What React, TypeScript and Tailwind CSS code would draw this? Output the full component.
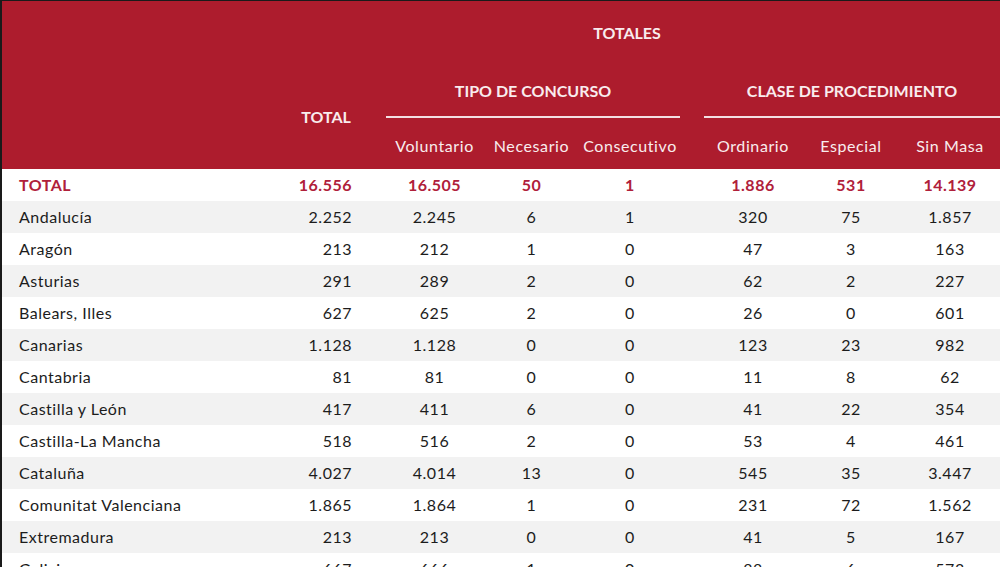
const rows: [string, string, string, string, string, string, string, string][] = [
  ['Andalucía', '2.252', '2.245', '6', '1', '320', '75', '1.857'],
  ['Aragón', '213', '212', '1', '0', '47', '3', '163'],
  ['Asturias', '291', '289', '2', '0', '62', '2', '227'],
  ['Balears, Illes', '627', '625', '2', '0', '26', '0', '601'],
  ['Canarias', '1.128', '1.128', '0', '0', '123', '23', '982'],
  ['Cantabria', '81', '81', '0', '0', '11', '8', '62'],
  ['Castilla y León', '417', '411', '6', '0', '41', '22', '354'],
  ['Castilla-La Mancha', '518', '516', '2', '0', '53', '4', '461'],
  ['Cataluña', '4.027', '4.014', '13', '0', '545', '35', '3.447'],
  ['Comunitat Valenciana', '1.865', '1.864', '1', '0', '231', '72', '1.562'],
  ['Extremadura', '213', '213', '0', '0', '41', '5', '167'],
  ['Galicia', '667', '666', '1', '0', '88', '6', '573'],
]

const cols = 'grid grid-cols-[288px_72px_24px_97px_97px_100px_24px_98px_98px_100px]'

function Row({ r, idx, total }: { r: string[]; idx: number; total?: boolean }) {
  const bg = idx % 2 === 1 ? 'bg-[#f2f2f2]' : 'bg-white'
  const txt = total ? 'font-bold text-[#b0203a]' : 'text-[#1c1c1c]'
  return (
    <div className={`${cols} ${bg} ${txt} h-8 items-center text-[16px] tracking-[0.5px]`}>
      <div className="pl-[17px]">{r[0]}</div>
      <div className="pr-[10px] text-right">{r[1]}</div>
      <div />
      <div className="text-center">{r[2]}</div>
      <div className="text-center">{r[3]}</div>
      <div className="text-center">{r[4]}</div>
      <div />
      <div className="text-center">{r[5]}</div>
      <div className="text-center">{r[6]}</div>
      <div className="text-center">{r[7]}</div>
    </div>
  )
}

export default function App() {
  return (
    <div
      className="h-[567px] w-[1000px] overflow-hidden border-l-2 border-t border-[#1a1a1a] bg-white"
      style={{ fontFamily: 'Lato, "Noto Sans", sans-serif' }}
    >
      <div className="h-[168px] bg-[#ad1c2d] text-[#f9ecee]">
        <div className="flex h-16 items-center justify-center pl-[252px] text-[16px] font-bold">TOTALES</div>
        <div className={`${cols} h-[104px]`}>
          <div />
          <div className="flex items-center justify-center text-[16px] font-bold">TOTAL</div>
          <div />
          <div className="col-span-3 flex flex-col">
            <div className="flex h-[53px] items-center justify-center border-b-2 border-[#f3dfe2] text-[16px] font-bold">
              TIPO DE CONCURSO
            </div>
            <div className="grid flex-1 grid-cols-[97px_97px_100px] items-center pt-1 text-[16px] tracking-[0.6px]">
              <div className="text-center">Voluntario</div>
              <div className="text-center">Necesario</div>
              <div className="text-center">Consecutivo</div>
            </div>
          </div>
          <div />
          <div className="col-span-3 flex flex-col">
            <div className="flex h-[53px] items-center justify-center border-b-2 border-[#f3dfe2] text-[16px] font-bold">
              CLASE DE PROCEDIMIENTO
            </div>
            <div className="grid flex-1 grid-cols-[98px_98px_100px] items-center pt-1 text-[16px] tracking-[0.6px]">
              <div className="text-center">Ordinario</div>
              <div className="text-center">Especial</div>
              <div className="text-center">Sin Masa</div>
            </div>
          </div>
        </div>
      </div>
      <Row r={['TOTAL', '16.556', '16.505', '50', '1', '1.886', '531', '14.139']} idx={0} total />
      {rows.map((r, i) => (
        <Row key={r[0]} r={r} idx={i + 1} />
      ))}
    </div>
  )
}
